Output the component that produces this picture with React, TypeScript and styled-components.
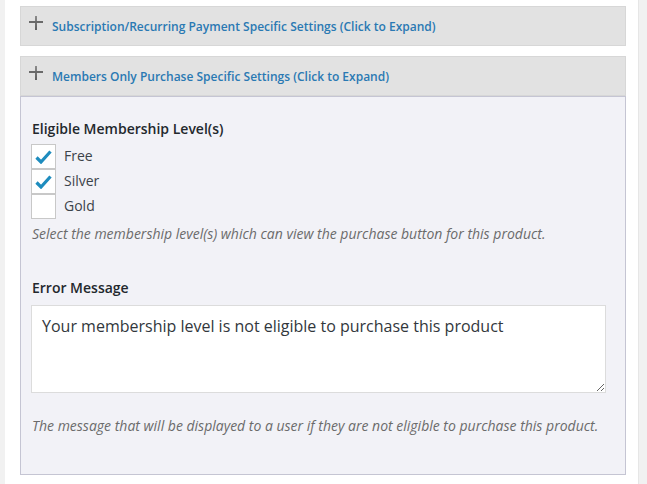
import React from 'react';
import styled, { createGlobalStyle } from 'styled-components';

const GlobalStyle = createGlobalStyle`
    html, body {
        margin: 0;
        padding: 0;
        background: #ffffff;
    }
    body {
        font-family: "Open Sans", "Liberation Sans", sans-serif;
        color: #32373c;
    }
`;

const Page = styled.div`
    display: flex;
    width: 647px;
    height: 484px;
    overflow: hidden;
`;

const SideStrip = styled.div<{ $right?: boolean }>`
    flex: 0 0 ${(p) => (p.$right ? '8px' : '5px')};
    background: #f1f1f1;
    border-left: ${(p) => (p.$right ? '1px solid #e6e6e6' : 'none')};
`;

const Main = styled.div`
    flex: 1;
    padding: 6px 12px 0 15px;
    display: flex;
    flex-direction: column;
    gap: 10px;
`;

const Section = styled.div`
    display: flex;
    flex-direction: column;
`;

const SectionHeader = styled.div`
    display: flex;
    align-items: center;
    gap: 9px;
    height: 38px;
    padding: 0 8px;
    background: #e2e2e2;
    border: 1px solid #d7d7d7;
    cursor: pointer;
`;

const PlusWrap = styled.span`
    display: flex;
    margin-top: -6px;
`;

const HeaderTitle = styled.span`
    font-size: 12px;
    font-weight: 600;
    color: #2a79b3;
    margin-top: 1px;
`;

const Panel = styled.div`
    background: #f2f2f7;
    border: 1px solid #c5c5d3;
    padding: 22px 10px 34px;
    height: 379px;
    box-sizing: border-box;
`;

const FieldLabel = styled.div<{ $gap?: number }>`
    font-size: 14px;
    font-weight: 600;
    color: #23282d;
    line-height: 20px;
    margin-top: ${(p) => p.$gap ?? 0}px;
    padding-left: 1px;
`;

const CheckList = styled.div`
    display: flex;
    flex-direction: column;
    margin-top: 5px;
`;

const CheckRow = styled.label`
    display: flex;
    align-items: flex-start;
    height: 25px;
    gap: 8px;
    font-size: 14px;
    color: #3c434a;
`;

const Box = styled.span`
    display: flex;
    align-items: center;
    justify-content: center;
    width: 25px;
    height: 25px;
    flex: 0 0 25px;
    box-sizing: border-box;
    background: #ffffff;
    border: 1px solid #c8c8c8;
`;

const CheckText = styled.span`
    line-height: 24px;
`;

const Help = styled.div<{ $gap: number }>`
    font-size: 14px;
    font-style: italic;
    color: #6b6b6b;
    line-height: 20px;
    margin-top: ${(p) => p.$gap}px;
    padding-left: 1px;
`;

const TextArea = styled.textarea`
    display: block;
    box-sizing: border-box;
    width: 575px;
    height: 88px;
    margin-top: 7px;
    padding: 8px 10px;
    border: 1px solid #dcdcdc;
    background: #ffffff;
    font-family: "Open Sans", "Liberation Sans", sans-serif;
    font-size: 16px;
    line-height: 24px;
    color: #32373c;
    resize: vertical;
    outline: none;
`;

const PlusIcon = () => (
    <svg width="14" height="14" viewBox="0 0 14 14">
        <defs>
            <linearGradient id="pg" x1="0" y1="0" x2="0" y2="1">
                <stop offset="0" stopColor="#8c8c8c" />
                <stop offset="1" stopColor="#5e5e5e" />
            </linearGradient>
        </defs>
        <rect x="6" y="0" width="2" height="14" fill="url(#pg)" />
        <rect x="0" y="5" width="14" height="2" fill="#6a6a6a" />
    </svg>
);

const CheckMark = () => (
    <svg width="17" height="14" viewBox="0 0 17 14">
        <path d="M1.5 7.5 L6 12 L15.5 1.5" fill="none" stroke="#1e8cbe" strokeWidth="3.2" strokeLinejoin="miter" />
    </svg>
);

const levels = [
    { name: 'Free', checked: true },
    { name: 'Silver', checked: true },
    { name: 'Gold', checked: false },
];

const App = () => {
    return (
        <Page>
            <GlobalStyle />
            <SideStrip />
            <Main>
                <Section>
                    <SectionHeader>
                        <PlusWrap><PlusIcon /></PlusWrap>
                        <HeaderTitle>Subscription/Recurring Payment Specific Settings (Click to Expand)</HeaderTitle>
                    </SectionHeader>
                </Section>

                <Section>
                    <SectionHeader>
                        <PlusWrap><PlusIcon /></PlusWrap>
                        <HeaderTitle>Members Only Purchase Specific Settings (Click to Expand)</HeaderTitle>
                    </SectionHeader>
                    <Panel>
                        <FieldLabel>Eligible Membership Level(s)</FieldLabel>
                        <CheckList>
                            {levels.map((l) => (
                                <CheckRow key={l.name}>
                                    <Box>{l.checked && <CheckMark />}</Box>
                                    <CheckText>{l.name}</CheckText>
                                </CheckRow>
                            ))}
                        </CheckList>
                        <Help $gap={5}>Select the membership level(s) which can view the purchase button for this product.</Help>

                        <FieldLabel $gap={34}>Error Message</FieldLabel>
                        <TextArea defaultValue="Your membership level is not eligible to purchase this product" />
                        <Help $gap={23}>The message that will be displayed to a user if they are not eligible to purchase this product.</Help>
                    </Panel>
                </Section>
            </Main>
            <SideStrip $right />
        </Page>
    );
};

export default App;
